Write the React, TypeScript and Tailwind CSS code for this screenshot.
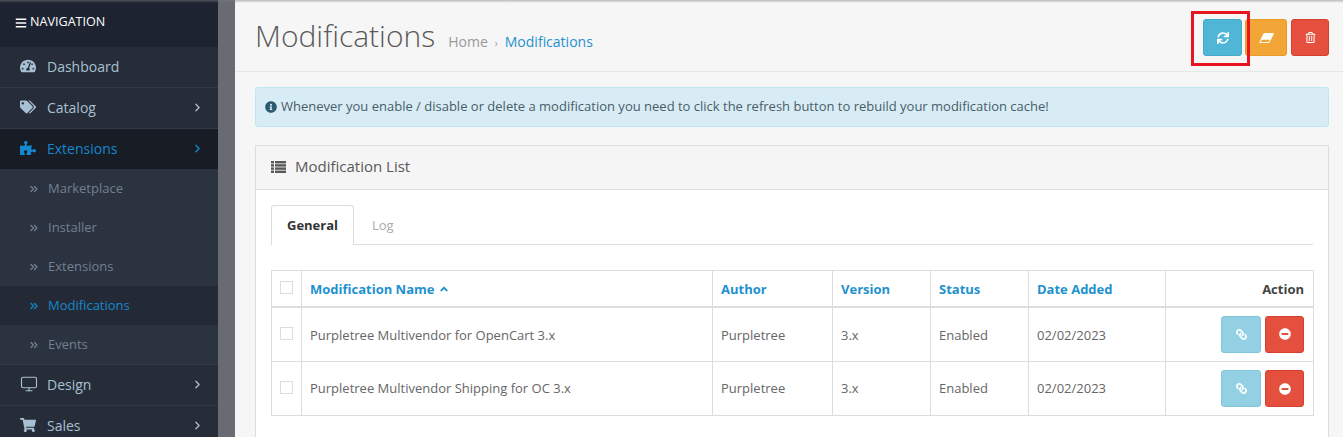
import React from "react";
import {
  FaTachometerAlt, FaTags, FaPuzzlePiece, FaShoppingCart,
  FaSync, FaRegTrashAlt, FaLink, FaMinusCircle, FaInfoCircle, FaBars, FaAngleUp,
} from "react-icons/fa";
import { ChevronRight, ChevronsRight, Monitor } from "lucide-react";

function NavItem({ icon, label, arrow, active, rowClass }: { icon: React.ReactNode; label: string; arrow?: boolean; active?: boolean; rowClass: string }) {
  return (
    <div className={`flex items-center shrink-0 pb-[2px] pl-5 pr-[14px] text-[14px] ${rowClass} ${active ? "text-[#1488d0]" : "text-[#a8c0d4]"}`}>
      <span className="w-[27px] flex items-center text-[16px]">{icon}</span>
      <span className="flex-1">{label}</span>
      {arrow && <ChevronRight size={13} strokeWidth={2.4} />}
    </div>
  );
}

function SubItem({ label, active }: { label: string; active?: boolean }) {
  return (
    <div className={`flex items-center h-[39px] shrink-0 pl-[28px] text-[13px] ${active ? "bg-[#242a35] text-[#1488d0]" : "text-[#72808f]"}`}>
      <ChevronsRight size={12} strokeWidth={2.6} className="mr-[8px]" />
      <span>{label}</span>
    </div>
  );
}

function TopBtn({ cls, children }: { cls: string; children: React.ReactNode }) {
  return <div className={`flex items-center justify-center h-[37px] rounded-[3px] border text-white ${cls}`}>{children}</div>;
}

function ListIcon() {
  return (
    <svg width="15" height="12" viewBox="0 0 15 12" fill="currentColor" className="mr-[9px]">
      <rect x="0" y="0" width="3" height="2.4" /><rect x="4" y="0" width="11" height="2.4" />
      <rect x="0" y="3.2" width="3" height="2.4" /><rect x="4" y="3.2" width="11" height="2.4" />
      <rect x="0" y="6.4" width="3" height="2.4" /><rect x="4" y="6.4" width="11" height="2.4" />
      <rect x="0" y="9.6" width="3" height="2.4" /><rect x="4" y="9.6" width="11" height="2.4" />
    </svg>
  );
}

function EraserIcon() {
  return (
    <svg width="15" height="10" viewBox="0 0 15 10">
      <path d="M5 0.5H14.5L10 9.5H0.7Z" fill="none" stroke="white" strokeWidth="1" />
      <path d="M5 0.5H14.5L11.2 6.8H1.9Z" fill="white" />
    </svg>
  );
}

const headCell = "border border-b-2 border-[#ddd] pl-[8px] pr-2 pt-[2px] text-left text-[#1e91cf]";

function Row({ name, rowClass, cell }: { name: string; rowClass: string; cell: string }) {
  return (
    <tr className={rowClass}>
      <td className="border border-[#ddd] text-center align-top pt-[19px]">
        <span className="block mx-auto w-[13px] h-[13px] border border-[#ddd]" />
      </td>
      <td className={cell}>{name}</td>
      <td className={cell}>Purpletree</td>
      <td className={cell}>3.x</td>
      <td className={cell}>Enabled</td>
      <td className={cell}>02/02/2023</td>
      <td className="border border-[#ddd] pl-2 pr-[9px]">
        <div className="flex justify-end gap-1">
          <div className="flex items-center justify-center w-10 h-[37px] rounded-[3px] bg-[#93d0e3] border border-[#82c6db] text-white text-[11px]"><FaLink className="-scale-x-100" /></div>
          <div className="flex items-center justify-center w-[39px] h-[37px] rounded-[3px] bg-[#e5503e] border border-[#d8402e] text-white text-[12px]"><FaMinusCircle /></div>
        </div>
      </td>
    </tr>
  );
}

export default function App() {
  return (
    <div className="relative flex h-[437px] w-[1343px] overflow-hidden bg-[#f6f6f6] text-[13px] text-[#666]" style={{ fontFamily: '"Open Sans", sans-serif' }}>
      <aside className="flex flex-col w-[218px] shrink-0 bg-[#2b3240]">
        <div className="flex items-center h-[47px] shrink-0 pl-[15px] pb-[2px] bg-[#1d2330] text-white text-[12.6px] gap-[3px]">
          <FaBars className="text-[12px]" />
          <span>NAVIGATION</span>
        </div>
        <NavItem icon={<FaTachometerAlt />} label="Dashboard" rowClass="h-[41px] border-b border-[#2f3a45] bg-[#262d38]" />
        <NavItem icon={<FaTags />} label="Catalog" arrow rowClass="h-[41px] border-b border-[#2f3a45] bg-[#262d38]" />
        <NavItem icon={<FaPuzzlePiece />} label="Extensions" arrow active rowClass="h-[40px] bg-[#181c24]" />
        <SubItem label="Marketplace" />
        <SubItem label="Installer" />
        <SubItem label="Extensions" />
        <SubItem label="Modifications" active />
        <SubItem label="Events" />
        <NavItem icon={<Monitor size={18} strokeWidth={1.5} />} label="Design" arrow rowClass="h-[42px] border-y border-[#2f3a45] bg-[#262d38]" />
        <NavItem icon={<FaShoppingCart />} label="Sales" arrow rowClass="h-[41px] border-b border-[#2f3a45] bg-[#262d38]" />
      </aside>
      <div className="w-[17px] shrink-0 bg-[#696b72]" />
      <main className="flex-1 min-w-0">
        <header className="flex justify-between h-[72px] border-b border-[#e6e6e6] pl-5 pr-[14px]">
          <div className="flex items-baseline mt-[21px]">
            <h1 className="text-[30px] font-light text-[#595959] leading-none">Modifications</h1>
            <div className="flex items-baseline ml-[13px] text-[14px] text-[#999]">
              <span>Home</span>
              <span className="text-[10px] mx-[7px]">›</span>
              <span className="text-[#1e91cf]">Modifications</span>
            </div>
          </div>
          <div className="flex mt-[19px]">
            <div className="w-[39px]"><TopBtn cls="bg-[#4fb6d6] border-[#45a9c9] text-[12px]"><FaSync /></TopBtn></div>
            <div className="w-[42px] ml-[3px]"><TopBtn cls="bg-[#f3a638] border-[#eb9a26]"><EraserIcon /></TopBtn></div>
            <div className="w-[38px] ml-[4px]"><TopBtn cls="bg-[#e5503e] border-[#d8402e] text-[11px]"><FaRegTrashAlt /></TopBtn></div>
          </div>
        </header>
        <div className="pl-5 pr-[14px] pt-[15px]">
          <div className="flex items-center h-10 gap-[4px] rounded-[3px] border border-[#bfe6f3] bg-[#d7ecf5] pl-[9px] text-[#4a5d68]">
            <FaInfoCircle className="text-[#2c5a70] text-[12px]" />
            <span>Whenever you enable / disable or delete a modification you need to click the refresh button to rebuild your modification cache!</span>
          </div>
          <section className="mt-[18px] border border-[#ddd] bg-white h-[300px]">
            <div className="flex items-center h-[44px] pb-[2px] border-b border-[#ddd] bg-[#f5f5f5] pl-[15px] text-[15px] text-[#595959]">
              <ListIcon />
              <span>Modification List</span>
            </div>
            <div className="px-[15px] pt-[15px]">
              <div className="flex h-10 border-b border-[#ddd]">
                <div className="flex items-center justify-center w-[83px] h-10 border border-b-0 border-[#ddd] bg-white font-bold text-[#333] rounded-t-[3px]">General</div>
                <div className="flex items-center pl-[18px] pt-[3px] text-[#aaa]">Log</div>
              </div>
              <table className="mt-[25px] w-[1042px] table-fixed border-collapse">
                <colgroup>
                  <col className="w-[30px]" />
                  <col className="w-[411px]" />
                  <col className="w-[120px]" />
                  <col className="w-[98px]" />
                  <col className="w-[98px]" />
                  <col className="w-[137px]" />
                  <col className="w-[148px]" />
                </colgroup>
                <thead>
                  <tr className="h-[36px] font-bold">
                    <th className="border border-b-2 border-[#ddd] align-top pt-[10px]">
                      <span className="block mx-auto w-[13px] h-[13px] border border-[#ddd]" />
                    </th>
                    <th className={headCell}>
                      <span className="inline-flex items-center gap-1">Modification Name <FaAngleUp className="text-[12px]" /></span>
                    </th>
                    <th className={headCell}>Author</th>
                    <th className={headCell}>Version</th>
                    <th className={headCell}>Status</th>
                    <th className={headCell}>Date Added</th>
                    <th className="border border-b-2 border-[#ddd] pl-2 pr-[9px] pt-[2px] text-right text-[#444]">Action</th>
                  </tr>
                </thead>
                <tbody>
                  <Row name="Purpletree Multivendor for OpenCart 3.x" rowClass="h-[55px]" cell="border border-[#ddd] pl-[8px] pr-2 pt-[2px]" />
                  <Row name="Purpletree Multivendor Shipping for OC 3.x" rowClass="h-[54px]" cell="border border-[#ddd] pl-[8px] pr-2" />
                </tbody>
              </table>
            </div>
          </section>
        </div>
      </main>
      <div className="absolute left-[1191px] top-[11px] w-[59px] h-[55px] border-[3px] border-[#e8141f]" />
      <div className="absolute inset-x-0 top-0 h-[3px] bg-linear-to-b from-[#808080]/50 to-transparent" />
    </div>
  );
}
